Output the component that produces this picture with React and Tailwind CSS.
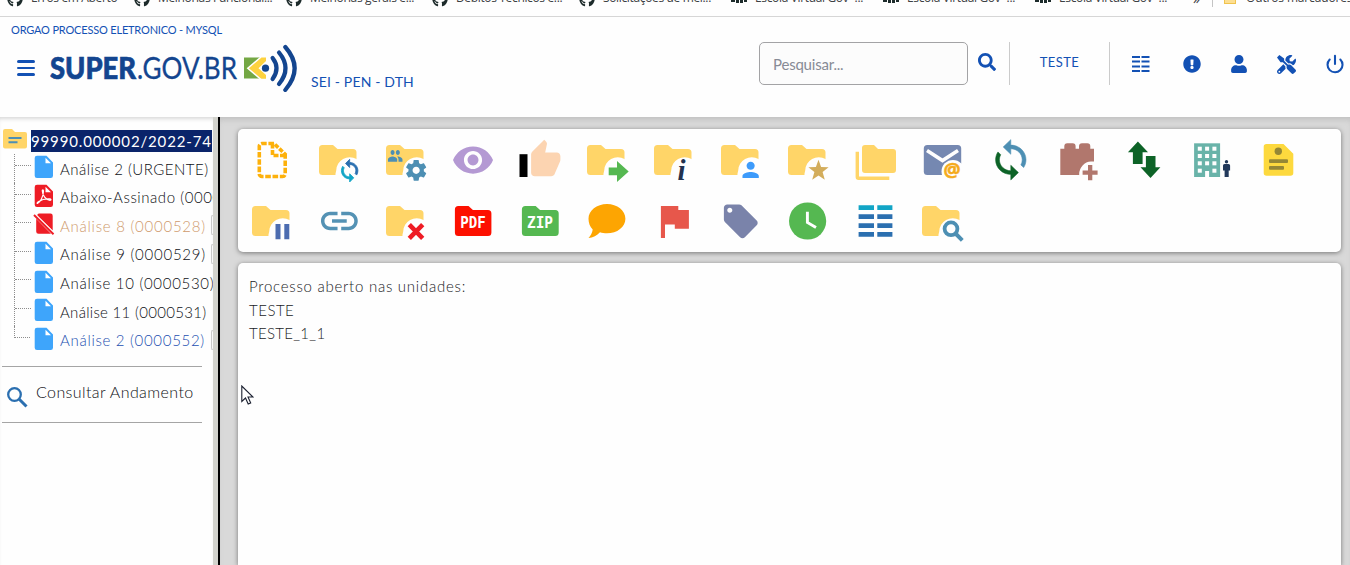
import React from "react";
import { FaSearch, FaExclamationCircle, FaUser, FaTools, FaGithub } from "react-icons/fa";
import { Power } from "lucide-react";

const SYNC_TOP =
  "M12 4V1L8 5l4 4V6c3.31 0 6 2.69 6 6 0 1.01-.25 1.97-.7 2.8l1.46 1.46C19.54 15.03 20 13.57 20 12c0-4.42-3.58-8-8-8z";
const SYNC_BOTTOM =
  "M12 18c-3.31 0-6-2.69-6-6 0-1.01.25-1.97.7-2.8L5.24 7.74C4.46 8.97 4 10.43 4 12c0 4.42 3.58 8 8 8v3l4-4-4-4v3z";
const GEAR =
  "M19.43 12.98c.04-.32.07-.64.07-.98s-.03-.66-.07-.98l2.11-1.65c.19-.15.24-.42.12-.64l-2-3.46c-.12-.22-.39-.3-.61-.22l-2.49 1c-.52-.4-1.08-.73-1.69-.98l-.38-2.65C14.46 2.18 14.25 2 14 2h-4c-.25 0-.46.18-.49.42l-.38 2.65c-.61.25-1.17.59-1.69.98l-2.49-1c-.23-.09-.49 0-.61.22l-2 3.46c-.13.22-.07.49.12.64l2.11 1.65c-.04.32-.07.65-.07.98s.03.66.07.98l-2.11 1.65c-.19.15-.24.42-.12.64l2 3.46c.12.22.39.3.61.22l2.49-1c.52.4 1.08.73 1.69.98l.38 2.65c.03.24.24.42.49.42h4c.25 0 .46-.18.49-.42l.38-2.65c.61-.25 1.17-.59 1.69-.98l2.49 1c.23.09.49 0 .61-.22l2-3.46c.12-.22.07-.49-.12-.64l-2.11-1.65zM12 15.5c-1.93 0-3.5-1.57-3.5-3.5s1.57-3.5 3.5-3.5 3.5 1.57 3.5 3.5-1.57 3.5-3.5 3.5z";
const GROUP =
  "M16 11c1.66 0 2.99-1.34 2.99-3S17.66 5 16 5c-1.66 0-3 1.34-3 3s1.34 3 3 3zm-8 0c1.66 0 2.99-1.34 2.99-3S9.66 5 8 5C6.34 5 5 6.34 5 8s1.34 3 3 3zm0 2c-2.33 0-7 1.17-7 3.5V19h14v-2.5c0-2.33-4.67-3.5-7-3.5zm8 0c-.29 0-.62.02-.97.05 1.16.84 1.97 1.97 1.97 3.45V19h6v-2.5c0-2.33-4.67-3.5-7-3.5z";
const EYE =
  "M12 4.5C7 4.5 2.73 7.61 1 12c1.73 4.39 6 7.5 11 7.5s9.27-3.11 11-7.5c-1.73-4.39-6-7.5-11-7.5zM12 17c-2.76 0-5-2.24-5-5s2.24-5 5-5 5 2.24 5 5-2.24 5-5 5zm0-8c-1.66 0-3 1.34-3 3s1.34 3 3 3 3-1.34 3-3-1.34-3-3-3z";
const THUMB =
  "M23 10c0-1.1-.9-2-2-2h-6.31l.95-4.57.03-.32c0-.41-.17-.79-.44-1.06L14.17 1 7.59 7.59C7.22 7.95 7 8.45 7 9v10c0 1.1.9 2 2 2h9c.83 0 1.54-.5 1.84-1.22l3.02-7.05c.09-.23.14-.47.14-.73v-2z";
const PERSON =
  "M12 12c2.21 0 4-1.79 4-4s-1.79-4-4-4-4 1.79-4 4 1.79 4 4 4zm0 2c-2.67 0-8 1.34-8 4v2h16v-2c0-2.66-5.33-4-8-4z";
const LINK =
  "M3.9 12c0-1.71 1.39-3.1 3.1-3.1h4V7H7c-2.76 0-5 2.24-5 5s2.24 5 5 5h4v-1.9H7c-1.71 0-3.1-1.39-3.1-3.1zM8 13h8v-2H8v2zm9-6h-4v1.9h4c1.71 0 3.1 1.39 3.1 3.1s-1.39 3.1-3.1 3.1h-4V17h4c2.76 0 5-2.24 5-5s-2.24-5-5-5z";
const TAG =
  "M21.41 11.58l-9-9C12.05 2.22 11.55 2 11 2H4c-1.1 0-2 .9-2 2v7c0 .55.22 1.05.59 1.42l9 9c.36.36.86.58 1.41.58.55 0 1.05-.22 1.41-.59l7-7c.37-.36.59-.86.59-1.41 0-.55-.23-1.06-.59-1.42zM5.5 7C4.67 7 4 6.33 4 5.5S4.67 4 5.5 4 7 4.67 7 5.5 6.33 7 5.5 7z";

function Folder({ color = "#ffd568", badge = true, x = 0, w = 37.5 }) {
  return (
    <>
      <path
        transform={`translate(${x} 0) scale(${w / 37.5} 1)`}
        d="M3.5 5H14l4.5 4H34a3.5 3.5 0 0 1 3.5 3.5V31.5A3.5 3.5 0 0 1 34 35H3.5A3.5 3.5 0 0 1 0 31.5V8.5A3.5 3.5 0 0 1 3.5 5z"
        fill={color}
      />
      {badge && <path d="M42 22V44H20A13.6 13.6 0 0 1 17.2 30.5A13.6 13.6 0 0 1 37.5 19z" fill="#fefefe" />}
    </>
  );
}

const ICONS = [
  <g fill="none" stroke="#fdb10b" strokeWidth="3.6">
    <path d="M22 3.5H10a2.7 2.7 0 0 0-2.7 2.7V33.8a2.7 2.7 0 0 0 2.7 2.7H30.5a2.7 2.7 0 0 0 2.7-2.7V14" strokeDasharray="5.6 1.7" />
    <path d="M23 4.5L34 15" strokeDasharray="4.5 1.5" />
    <path d="M20.5 3.5V15.5H33" strokeDasharray="5 1.5" />
  </g>,
  <>
    <Folder />
    <g transform="translate(18.3 18.3) scale(1.03)">
      <path d={SYNC_TOP} fill="#2a6fb0" stroke="#2a6fb0" strokeWidth=".8" />
      <path d={SYNC_BOTTOM} fill="#12a5c6" stroke="#12a5c6" strokeWidth=".8" />
    </g>
  </>,
  <>
    <Folder />
    <path d={GROUP} fill="#4d8fb3" transform="translate(1.3 5.7) scale(.66 .84)" />
    <path d={GEAR} fill="#4d8fb3" transform="translate(17.8 18) scale(1.03)" />
  </>,
  <path d={EYE} fill="#b499d3" transform="translate(-1.8 -1.8) scale(1.818)" />,
  <>
    <path d="M-.5 14.2h8V37h-8z" fill="#000" />
    <path d={THUMB} fill="#fcd4b1" transform="translate(-1.7 -2.1) scale(1.83)" />
  </>,
  <>
    <Folder />
    <path d="M21.7 27.5H30V21L41.7 31.5 30 42V35.3H21.7z" fill="#55b851" />
  </>,
  <>
    <Folder />
    <text x="23.5" y="40" fontSize="29" fontWeight="700" fontStyle="italic" fill="#22324f" className="font-['Liberation_Serif',serif]">i</text>
  </>,
  <>
    <Folder />
    <path d={PERSON} fill="#3d9bfb" transform="translate(17.4 17.6) scale(1.02)" />
  </>,
  <>
    <Folder />
    <path d="M30.5 19.8l2.6 7.2 7.500.2-6 4.900 2.200 7.600-6.300-4.300-6.300 4.300 2.200-7.600-6-4.900 7.500-.2z" fill="#d3ad5c" />
  </>,
  <g fill="#ffd568">
    <path d="M10 5H19l4 4H38a3 3 0 0 1 3 3V30a3 3 0 0 1-3 3H10a3 3 0 0 1-3-3V8a3 3 0 0 1 3-3z" />
    <path d="M.6 11.7H4V36.5H34.3V40H3.6A3 3 0 0 1 .6 37z" />
  </g>,
  <>
    <rect x="1.8" y="5" width="37.4" height="30" rx="3.5" fill="#7588b1" />
    <path d="M5 10.5L20.5 20.5 36 10.5" fill="none" stroke="#fefefe" strokeWidth="3.600" />
    <circle cx="31" cy="31.500" r="11.500" fill="#fefefe" />
    <text x="21.600" y="37" fontSize="19" fontWeight="700" fill="#f5ab1c" stroke="#f5ab1c" strokeWidth=".5" className="font-['Open_Sans',sans-serif]">@</text>
  </>,
  <g transform="translate(-2 -2.200) scale(1.900 1.830)">
    <path d={SYNC_TOP} fill="#4d8fb3" stroke="#4d8fb3" strokeWidth=".3" />
    <path d={SYNC_BOTTOM} fill="#0d6327" stroke="#0d6327" strokeWidth=".3" />
  </g>,
  <>
    <path d="M3.300 8.700H7.300V6.300a3 3 0 0 1 3-3h5.300a3 3 0 0 1 3 3V8.700H22V6.300a3 3 0 0 1 3-3h5.300a3 3 0 0 1 3 3V8.700H37V35H3.300z" fill="#b1776d" />
    <path d="M42 21.500V43H22.200V34A12.500 12.500 0 0 1 34 21.500z" fill="#fefefe" />
    <path d="M31 25h4.300v5.500h5.300v4.300H35.300v5.500H31v-5.500H25.600v-4.300H31z" fill="#b1776d" />
  </>,
  <g fill="#0d6327">
    <path d="M13.900 1.500L24 12.300H18.600V24H8.900V12.300H3.900z" />
    <path d="M21.900 16h9.600V27.300h4.900L26.500 38 16.500 27.300h5.400z" />
  </g>,
  <>
    <path d="M3.100 3.300h26V37h-26z" fill="#69b3a9" />
    <g fill="#fefefe">
      {[6.7, 14, 21.3, 28.7].map((y) =>
        [6.8, 14.1, 21.4].map((x) => (x === 14.1 && y === 28.7 ? null : <rect key={`${x}-${y}`} x={x} y={y} width="4" height="4" />))
      )}
      <path d="M14.100 31h4v6.500h-4z" />
    </g>
    <g fill="#22395b">
      <circle cx="35.500" cy="21.800" r="1.700" />
      <path d="M33.500 24h4a1.600 1.600 0 0 1 1.600 1.600V30.500H37.700V37H33.600V30.500H32V25.600A1.600 1.600 0 0 1 33.500 24z" />
    </g>
  </>,
  <>
    <path d="M8.500 4H25.500L35.300 13.800V33a2.800 2.800 0 0 1-2.800 2.800h-24A2.800 2.800 0 0 1 5.700 33V6.800A2.800 2.800 0 0 1 8.500 4z" fill="#fdd93e" />
    <g fill="#958735">
      <circle cx="20.300" cy="11.300" r="3.700" />
      <rect x="11" y="19.200" width="19" height="3.800" rx="1" />
      <rect x="11" y="25.900" width="15" height="3.800" rx="1" />
    </g>
  </>,
  <>
    <Folder />
    <path d="M23.500 23h5V38.300h-5zM32.300 23h5V38.300h-5z" fill="#4c6cb0" />
  </>,
  <path d={LINK} fill="#5492b4" transform="translate(-1.700 -2.100) scale(1.840)" />,
  <>
    <Folder />
    <path d="M23.300 23.600L36.700 37.300M36.700 23.600L23.300 37.300" stroke="#ee1c25" strokeWidth="4.600" />
  </>,
  <>
    <Folder color="#fd1000" badge={false} x={1.9} w={36.5} />
    <text x="7.200" y="27.300" fontSize="15" fontWeight="700" fill="#fff" textLength="25.500" lengthAdjust="spacingAndGlyphs" className="font-['DejaVu_Sans_Mono',monospace]">PDF</text>
  </>,
  <>
    <Folder color="#55b851" badge={false} x={1.9} w={36.8} />
    <text x="7" y="27.300" fontSize="15" fontWeight="700" fill="#fff" textLength="26" lengthAdjust="spacingAndGlyphs" className="font-['DejaVu_Sans_Mono',monospace]">ZIP</text>
  </>,
  <path d="M20 3c10.200 0 18.400 6.500 18.400 14.700S30.200 32.300 20 32.300c-2.600 0-5-.4-7-1.100C10 34.500 6 36.500 1.500 37c2-2 3.800-5 4.200-8.500C3 25.800 1.500 22 1.500 17.700 1.500 9.500 9.800 3 20 3z" fill="#fda502" />,
  <path d="M6.900 5H24.300V9H34.900V27.700H20.800V23.500H11V37H6.900z" fill="#e7574b" />,
  <path d={TAG} fill="#7a83aa" transform="translate(-.5 0) scale(1.690)" />,
  <>
    <circle cx="19.600" cy="20" r="18.600" fill="#55b851" />
    <path d="M19.400 10.800V21.500L28 26.500" fill="none" stroke="#fff" strokeWidth="2.900" />
  </>,
  <>
    {[4.3, 13.3, 22.3, 31].map((y, i) => (
      <path key={y} d={`M3.6 ${y}H19v4.7H3.6zM22.3 ${y}H37.4v4.7H22.3z`} fill={i ? "#2b6fb0" : "#12a5c6"} />
    ))}
  </>,
  <>
    <Folder />
    <g fill="none" stroke="#4d8fb3">
      <circle cx="29" cy="27.800" r="6.400" strokeWidth="3.800" />
      <path d="M33.500 32.500L40.300 39.300" strokeWidth="4" />
    </g>
  </>,
];

function ToolIcon({ children }) {
  return (
    <div className="flex h-[61px] items-center justify-center">
      <svg viewBox="0 0 40 40" className="size-10 overflow-visible">{children}</svg>
    </div>
  );
}

function FileIcon({ kind }) {
  const color = kind === "file" ? "#3ea5fb" : "#ee1c25";
  return (
    <svg viewBox="0 0 20 24" className="h-6 w-5 shrink-0 overflow-visible">
      {kind === "cancelled" ? (
        <>
          <path d="M5 1.500H16.500A2.200 2.200 0 0 1 18.700 3.700V18.500L3.200 3.200A2.200 2.200 0 0 1 5 1.500zM2.200 6.800L17 21.700H4.500A2.300 2.300 0 0 1 2.200 19.400z" fill={color} />
          <path d="M2 3.200L19.500 20.500" stroke="#fefefe" strokeWidth="1.500" />
          <path d="M0 3L19.500 22.300" stroke={color} strokeWidth="1.900" />
        </>
      ) : (
        <>
          <path d="M3 .7H12.500L19 7.500V20.800a2.300 2.300 0 0 1-2.300 2.300H3A2.300 2.300 0 0 1 .7 20.800V3A2.300 2.300 0 0 1 3 .7z" fill={color} />
          <path d="M11.500 2.800V8.200H17z" fill="#fff" />
        </>
      )}
      {kind === "pdf" && (
        <path d="M3.500 19.500c2.500-1 6-7 6-12.500 0-1.500-1.300-1.500-1.200 0 .2 4.500 3.500 9 7.700 9.300 1.500 0 1.200-1.300-.3-1.400-4-.3-8 .6-11 2.500-1.500 1-2 2.100-1.200 2.100z" fill="none" stroke="#fff" strokeWidth="1.200" />
      )}
    </svg>
  );
}

const DOCS = [
  { kind: "file", text: "Análise 2 (URGENTE)", cls: "text-[#0d0f14] tracking-[0.5px]" },
  { kind: "pdf", text: "Abaixo-Assinado (0000527)", cls: "text-[#0d0f14] tracking-[0.55px]" },
  { kind: "cancelled", text: "Análise 8 (0000528)", cls: "text-[#cf9a6c] tracking-[0.75px]", tail: true },
  { kind: "file", text: "Análise 9 (0000529)", cls: "text-[#0d0f14] tracking-[0.75px]", tail: true },
  { kind: "file", text: "Análise 10 (0000530)", cls: "text-[#0d0f14] tracking-[0.7px]" },
  { kind: "file", text: "Análise 11 (0000531)", cls: "text-[#0d0f14] tracking-[0.3px]" },
  { kind: "file", text: "Análise 2 (0000552)", cls: "text-[#1c4fb0] tracking-[0.7px]", tail: true },
];

const BOOKMARKS = [
  ["Erros em Aberto", "github", "w-[127px]"],
  ["Melhorias Funcionai...", "github", "w-[152px]"],
  ["Melhorias gerais e...", "github", "w-[146px]"],
  ["Débitos Técnicos e...", "github", "w-[147px]"],
  ["Solicitações de mel...", "github", "w-[152px]"],
  ["Escola Virtual Gov -...", "evg", "w-[152px]"],
  ["Escola Virtual Gov -...", "evg", "w-[152px]"],
  ["Escola Virtual Gov -...", "evg", "w-[158px]"],
];

function Bookmarks() {
  return (
    <div className="flex h-[17px] shrink-0 overflow-hidden border-b border-[#d6d6d6] pl-[7px] font-['Open_Sans',sans-serif] text-[12px] tracking-[-0.35px] text-[#3c4043]">
      <div className="-mt-[11px] flex h-[18px] items-center whitespace-nowrap">
        {BOOKMARKS.map(([label, icon, width], i) => (
          <div key={i} className={`flex shrink-0 items-center gap-2 ${width}`}>
            {icon === "github" ? (
              <FaGithub className="mt-[2px] size-4 shrink-0 text-[#1d2b2b]" />
            ) : (
              <svg viewBox="0 0 16 16" className="size-4 shrink-0"><path d="M0 8h4v4H0zM5 9h3v4H5zM9 8h3v5H9zM13 8h3v4h-3z" fill="#1d2b2b" /></svg>
            )}
            <span>{label}</span>
          </div>
        ))}
        <span className="w-[19px] text-[14px]">»</span>
        <span className="mt-1 h-3.5 w-[12px] border-l border-[#c4c4c4]" />
        <span className="mr-[10px] h-3 w-3 shrink-0 border border-[#f0c34e] bg-[#fddf92]" />
        <span className="tracking-[-0.15px]">Outros marcadores</span>
      </div>
    </div>
  );
}

function Logo() {
  return (
    <svg viewBox="0 0 250 50" className="h-[50px] w-[250px]">
      <g fill="#13458f" className="font-['Lato',sans-serif]">
        <text x="0" y="36.500" fontSize="31" fontWeight="900" stroke="#13458f" strokeWidth=".7" textLength="86" lengthAdjust="spacingAndGlyphs">SUPER</text>
        <text x="87" y="36.500" fontSize="31" stroke="#13458f" strokeWidth=".3" textLength="100" lengthAdjust="spacingAndGlyphs">.GOV.BR</text>
      </g>
      <path d="M194 15.500h17L197.500 26.200 211 36.500H194z" fill="#74a744" />
      <path d="M211 15.500L197.500 26.200 211 36.800h5V33L208.500 26.200 216 19V15.500z" fill="#fdd23f" />
      <path d="M211 15L197.800 26.200 211 37.500" fill="none" stroke="#fff" strokeWidth="1.500" />
      <circle cx="215.500" cy="26.200" r="3.600" fill="#13458f" />
      <g fill="none" stroke="#13458f" strokeWidth="4.200" strokeLinecap="round">
        <path d="M222.600 16Q230.500 26.200 222.600 37" />
        <path d="M229 10.500Q242 26.200 229 42" />
        <path d="M235.300 5Q254 26.200 235.300 48" />
      </g>
    </svg>
  );
}

function Header() {
  return (
    <header className="flex h-[100px] shrink-0 bg-[#fefefe] text-[#1351b4]">
      <div className="w-[430px] shrink-0 pl-[10px]">
        <div className="pl-px pt-[6px] text-[11px] leading-[14px] tracking-[-0.18px]">ORGAO PROCESSO ELETRONICO - MYSQL</div>
        <div className="flex pl-[7px] pt-[5px]">
          <div className="flex w-[33px] flex-col gap-[4px] pt-[18px]">
            {[0, 1, 2].map((i) => <span key={i} className="h-[2.500px] w-[18px] rounded-sm bg-[#1351b4]" />)}
          </div>
          <Logo />
          <span className="whitespace-nowrap pl-[11px] pt-[31px] text-[14px] leading-[18px] tracking-[0.15px]">SEI - PEN - DTH</span>
        </div>
      </div>
      <div className="ml-auto flex w-[591px] shrink-0 pt-[25px]">
        <div className="flex h-[43px] w-[209px] items-center rounded-[5px] border border-[#a3a3a5] bg-[#fcfcfc] px-[13px] pt-[2px] text-[15px] tracking-[-0.2px] text-[#888b96]">Pesquisar...</div>
        <FaSearch className="ml-[10px] mt-[11px] size-[18px]" />
        <div className="ml-[13px] flex h-[43px] w-[101px] items-center justify-center border-x border-[#cbcbcb] pb-[2px] text-[13px] tracking-[0.4px]">TESTE</div>
        <div className="flex w-[240px] items-start pl-[22px] pt-[13px]">
          <svg viewBox="0 0 18 18" className="mr-[33px] size-[18px]">
            <path d="M0 2h8M9.500 2h8M0 6.500h8M9.500 6.500h8M0 11.500h8M9.500 11.500h8M0 16h8M9.500 16h8" stroke="#1351b4" strokeWidth="2.200" />
          </svg>
          <FaExclamationCircle className="mr-[29px] size-[18px]" />
          <FaUser className="mr-[29px] size-[18px]" />
          <FaTools className="mr-[29px] size-[19px]" />
          <Power className="-mt-px size-[20px]" strokeWidth={2.5} />
        </div>
      </div>
    </header>
  );
}

function Sidebar() {
  return (
    <aside className="w-[213px] shrink-0 overflow-hidden whitespace-nowrap bg-[#fefefe] text-[15px] shadow-[inset_0_4px_5px_-3px_#ccc]">
      <div className="flex h-[37px] items-center pl-[3px] pt-[11px]">
        <svg viewBox="0 0 24 20" className="-mt-1 h-5 w-6 shrink-0">
          <path d="M2 0H9l3 3H22a2 2 0 0 1 2 2V17.500a2 2 0 0 1-2 2H2a2 2 0 0 1-2-2V2A2 2 0 0 1 2 0z" fill="#ffd568" />
          <path d="M5.500 9H18.500M5.500 13.300H14.500" stroke="#4d8fb3" strokeWidth="2" />
        </svg>
        <span className="ml-1 h-[22px] w-[181px] bg-[#0a246a] leading-[23px] tracking-[0.85px] text-white">99990.000002/2022-74</span>
      </div>
      <div className="font-light">
        {DOCS.map((d, i) => (
          <div key={i} className="flex h-[28.600px] items-center pl-[14px]">
            <div className="h-full w-[20px] shrink-0">
              <div className={i === DOCS.length - 1 ? "h-[12px] w-4 border-b border-l border-dotted border-[#8d8d8d]" : "h-full border-l border-dotted border-[#8d8d8d]"}>
                {i < DOCS.length - 1 && <div className="h-[12px] w-4 border-b border-dotted border-[#8d8d8d]" />}
              </div>
            </div>
            <div className="-mt-[2px]"><FileIcon kind={d.kind} /></div>
            <span className={`ml-[6px] pt-px ${d.cls}`}>{d.text}</span>
            {d.tail && <span className="ml-auto h-5 w-[2px] shrink-0 rounded-l border-y border-l border-[#c9c9c9]" />}
          </div>
        ))}
      </div>
      <div className="ml-[2px] mt-[12px] flex h-[57px] w-[200px] items-center border-y border-[#a5a5a5] pl-1">
        <svg viewBox="0 0 22 22" className="mt-1 size-[22px]" fill="none" stroke="#2b6fb0">
          <circle cx="8.500" cy="8.500" r="6.300" strokeWidth="2.300" />
          <path d="M13 13L20.500 20.500" strokeWidth="3" />
        </svg>
        <span className="-mt-[5px] ml-2 text-[16px] font-light tracking-[0.4px] text-[#0d0f14]">Consultar Andamento</span>
      </div>
    </aside>
  );
}

export default function App() {
  return (
    <div className="flex h-[565px] w-[1350px] flex-col overflow-hidden bg-[#fefefe] font-['Lato',sans-serif]">
      <Bookmarks />
      <Header />
      <div className="flex min-h-0 flex-1">
        <Sidebar />
        <div className="w-[7px] shrink-0 border-r-2 border-black bg-[#d2d2cc]" />
        <main className="flex min-w-0 flex-1 flex-col gap-[11px] bg-[#d9d9d9] pl-[18px] pr-[9px] pt-3 shadow-[inset_0_5px_6px_-3px_#bdbdbd]">
          <section className="grid h-[123px] shrink-0 grid-cols-[repeat(16,67.1px)] content-start rounded-[5px] bg-[#fefefe] shadow-[0_1px_5px_#777]">
            {ICONS.map((icon, i) => <ToolIcon key={i}>{icon}</ToolIcon>)}
          </section>
          <section className="flex-1 rounded-t-[5px] bg-[#fefefe] pl-[11px] pt-[12px] text-[15px] font-light leading-[23.500px] text-[#1a1c26] shadow-[0_1px_5px_#777]">
            <p className="tracking-[0.75px]">Processo aberto nas unidades:</p>
            <p className="tracking-[0.5px]">TESTE</p>
            <p className="tracking-[0.3px]">TESTE_1_1</p>
          </section>
        </main>
      </div>
      <svg viewBox="0 0 13 20" className="absolute left-[241px] top-[385px] h-5 w-[13px]">
        <path d="M.8 1V16.500L4.500 13 7.200 19 9.700 18 7 12H12z" fill="#fff" stroke="#1b2030" strokeWidth="1.100" />
      </svg>
    </div>
  );
}
